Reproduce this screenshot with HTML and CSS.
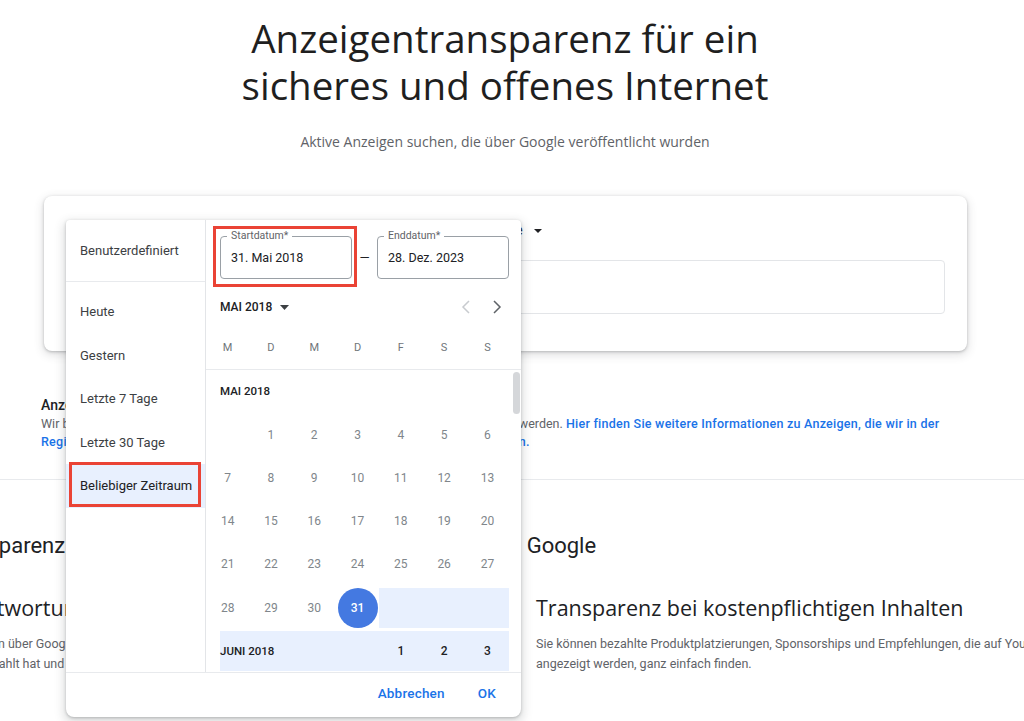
FILE: index.html
```html
<!DOCTYPE html>
<html lang="de">
<head>
  <meta charset="UTF-8">
  <meta name="viewport" content="width=device-width, initial-scale=1.0">
  <title>Google Anzeigentransparenz</title>
  <link rel="stylesheet" href="styles.css">
</head>
<body>
  <main class="page">
    <div class="wrap">
      <header class="hero">
        <h1>Anzeigentransparenz für ein<br>sicheres und offenes Internet</h1>
        <p class="sub">Aktive Anzeigen suchen, die über Google veröffentlicht wurden</p>
      </header>

      <!-- Suchkarte mit Filtern -->
      <section class="search-card">
        <div class="filters">
          <span class="dropdown">Beliebiger Zeitraum <svg width="8" height="4" viewBox="0 0 8 4"><path d="M0 0h8L4 4z"/></svg></span>
          <span class="dropdown">Deutschland <svg width="8" height="4" viewBox="0 0 8 4"><path d="M0 0h8L4 4z"/></svg></span>
          <span class="dropdown">Alle Formate <svg width="8" height="4" viewBox="0 0 8 4"><path d="M0 0h8L4 4z"/></svg></span>
        </div>
        <div class="search-box"></div>
      </section>

      <section class="info">
        <h2>Anzeigen in der Europäischen Union</h2>
        <p>Wir bieten Einblick in Anzeigen verifizierter Werbetreibender, die bei Google geschaltet werden. <a href="#">Hier finden Sie weitere Informationen zu Anzeigen, die wir in der Region Europäischer Wirtschaftsraum (EWR) und in der Schweiz ausgeliefert haben.</a></p>
      </section>
    </div>

    <hr class="rule">

    <section class="about">
      <h2>Transparenz sowie Verantwortung bei Werbeanzeigen über Google</h2>
      <div class="columns">
        <article>
          <h3>Verantwortung der Werbetreibenden</h3>
          <p>Kampagnen über Google sind transparent: Sie sehen den Namen des Werbetreibenden, wer für die Inhalte bezahlt hat und wo sie ausgeliefert wurden.</p>
        </article>
        <article>
          <h3>Transparenz bei kostenpflichtigen Inhalten</h3>
          <p>Sie können bezahlte Produktplatzierungen, Sponsorships und Empfehlungen, die auf YouTube angezeigt werden, ganz einfach finden.</p>
        </article>
      </div>
    </section>

    <!-- Datumsauswahl (geöffnet) -->
    <div class="picker">
      <div class="picker-main">
        <ul class="presets">
          <li class="preset-custom">Benutzerdefiniert</li>
          <li>Heute</li>
          <li>Gestern</li>
          <li>Letzte 7 Tage</li>
          <li>Letzte 30 Tage</li>
          <li class="selected marked">Beliebiger Zeitraum</li>
        </ul>

        <div class="calendar">
          <div class="range">
            <div class="field marked">
              <span class="field-label">Startdatum*</span>
              31. Mai 2018
            </div>
            <span class="dash">—</span>
            <div class="field">
              <span class="field-label">Enddatum*</span>
              28. Dez. 2023
            </div>
          </div>

          <div class="month-nav">
            <span class="month-select">MAI 2018 <svg width="9" height="5" viewBox="0 0 9 5"><path d="M0 0h9L4.5 5z"/></svg></span>
            <span class="nav-btn disabled"><svg width="10" height="14" viewBox="0 0 10 14"><polyline points="8,1 2,7 8,13"/></svg></span>
            <span class="nav-btn"><svg width="10" height="14" viewBox="0 0 10 14"><polyline points="2,1 8,7 2,13"/></svg></span>
          </div>

          <div class="weekdays">
            <span>M</span><span>D</span><span>M</span><span>D</span><span>F</span><span>S</span><span>S</span>
          </div>

          <div class="scroll">
            <div class="month-label">MAI 2018</div>
            <div class="week">
              <span></span><span>1</span><span>2</span><span>3</span><span>4</span><span>5</span><span>6</span>
            </div>
            <div class="week">
              <span>7</span><span>8</span><span>9</span><span>10</span><span>11</span><span>12</span><span>13</span>
            </div>
            <div class="week">
              <span>14</span><span>15</span><span>16</span><span>17</span><span>18</span><span>19</span><span>20</span>
            </div>
            <div class="week">
              <span>21</span><span>22</span><span>23</span><span>24</span><span>25</span><span>26</span><span>27</span>
            </div>
            <div class="week">
              <span>28</span><span>29</span><span>30</span><span class="start"><b>31</b></span><span class="in-range"></span><span class="in-range"></span><span class="in-range"></span>
            </div>
            <div class="week next-month">
              <span class="in-range month-inline">JUNI 2018</span><span class="in-range">1</span><span class="in-range">2</span><span class="in-range">3</span>
            </div>
            <div class="scroll-thumb"></div>
          </div>
        </div>
      </div>

      <div class="picker-footer">
        <button class="text-btn">Abbrechen</button>
        <button class="text-btn">OK</button>
      </div>
    </div>
  </main>
</body>
</html>
```

FILE: styles.css
```css
body {
  margin: 0;
  font-family: Roboto, "Noto Sans", Arial, sans-serif;
  color: #202124;
  background: #fff;
  overflow: hidden;
}
.page {
  position: relative;
  height: 721px;
  overflow: hidden;
}
.wrap {
  width: 1010px;
}
.hero {
  text-align: center;
  padding-top: 15px;
}
.hero h1 {
  margin: 0;
  font-family: "Open Sans", Roboto, sans-serif;
  font-size: 38.5px;
  font-weight: 400;
  line-height: 47px;
  color: #1f1f1f;
}
.sub {
  margin: 23px 0 0;
  font-family: "Open Sans", Roboto, sans-serif;
  font-size: 14px;
  line-height: 20px;
  color: #5f6368;
}
.search-card {
  margin: 44px 43px 0 44px;
  padding: 24px 22px 37px;
  background: #fff;
  border-radius: 8px;
  box-shadow: 0 1px 3px rgba(60, 64, 67, 0.3), 0 3px 8px 2px rgba(60, 64, 67, 0.13);
}
.filters {
  display: flex;
  gap: 70px;
  height: 20px;
  align-items: center;
  font-size: 14px;
}
.dropdown svg {
  margin-left: 8px;
  vertical-align: middle;
  fill: #202124;
}
.search-box {
  margin-top: 20px;
  height: 52px;
  border: 1px solid #e3e5e8;
  border-radius: 4px;
}
.info {
  margin: 44px 65px 0 41px;
}
.info h2 {
  margin: 0;
  font-size: 14px;
  font-weight: 500;
  line-height: 20px;
}
.info p {
  margin: 0;
  font-size: 12.5px;
  line-height: 18px;
  color: #5f6368;
}
.info a {
  color: #1a73e8;
  font-weight: 500;
  letter-spacing: 0.25px;
  text-decoration: none;
}
.rule {
  margin: 28px 0 0;
  border: none;
  border-top: 1px solid #e8eaed;
}
.about {
  margin-left: -56px;
  width: 1156px;
}
.about h2 {
  margin: 51px 0 0;
  font-size: 22px;
  font-weight: 400;
  line-height: 30px;
  word-spacing: 0.6px;
}
.columns {
  display: grid;
  grid-template-columns: 560px 560px;
  gap: 38px;
  margin: 33px 0 0 -6px;
}
.columns h3 {
  margin: 0;
  font-family: "Open Sans", Roboto, sans-serif;
  font-size: 21.5px;
  font-weight: 500;
  line-height: 28px;
}
.columns p {
  margin: 12px 0 0;
  font-size: 12.5px;
  line-height: 20px;
  color: #5f6368;
}

/* Datumsauswahl */
.picker {
  position: absolute;
  left: 66px;
  top: 220px;
  width: 455px;
  background: #fff;
  border-radius: 4px 4px 8px 8px;
  box-shadow: 0 1px 3px rgba(60, 64, 67, 0.3), 0 4px 10px 3px rgba(60, 64, 67, 0.15);
  font-size: 13px;
  color: #3c4043;
}
.picker-main {
  display: flex;
  height: 452px;
}
.presets {
  width: 139px;
  flex-shrink: 0;
  margin: 0;
  padding: 0;
  list-style: none;
  border-right: 1px solid #e3e5e8;
}
.presets li {
  position: relative;
  height: 43.5px;
  display: flex;
  align-items: center;
  padding-left: 14px;
}
.presets .preset-custom {
  height: 62px;
  margin-bottom: 8px;
  border-bottom: 1px solid #e8eaed;
  box-sizing: border-box;
}
.presets .selected {
  background: #e8f0fe;
  color: #202124;
}
.marked::after {
  content: "";
  position: absolute;
  border: 3px solid #ea4335;
}
.presets .marked::after {
  top: -2px;
  right: 4px;
  bottom: 1px;
  left: 3px;
}
.calendar {
  flex: 1;
  display: flex;
  flex-direction: column;
  min-width: 0;
}
.range {
  display: flex;
  align-items: center;
  padding: 16px 0 0 14px;
}
.field {
  position: relative;
  width: 132px;
  height: 43px;
  box-sizing: border-box;
  border: 1px solid #9aa0a6;
  border-radius: 4px;
  padding-left: 10px;
  display: flex;
  align-items: center;
  font-size: 12.5px;
  color: #202124;
}
.field.marked::after {
  top: -11px;
  right: -6px;
  bottom: -9px;
  left: -8px;
}
.field-label {
  position: absolute;
  top: -7px;
  left: 6px;
  padding: 0 4px;
  background: #fff;
  font-size: 10.5px;
  line-height: 12px;
  color: #5f6368;
}
.dash {
  width: 25px;
  text-align: center;
  color: #202124;
}
.month-nav {
  display: flex;
  align-items: center;
  gap: 7px;
  height: 36px;
  margin-top: 10px;
  padding: 0 12px 0 14px;
}
.month-select {
  flex: 1;
  font-size: 12px;
  font-weight: 500;
  color: #202124;
}
.month-select svg {
  margin-left: 5px;
  vertical-align: middle;
  fill: #3c4043;
}
.nav-btn {
  width: 24px;
  display: flex;
  justify-content: center;
}
.nav-btn svg {
  fill: none;
  stroke: #5f6368;
  stroke-width: 1.5;
}
.nav-btn.disabled svg {
  stroke: #c8cbcf;
}
.weekdays,
.week {
  display: grid;
  grid-template-columns: repeat(7, 43.3px);
}
.weekdays {
  height: 44px;
  align-items: center;
  border-bottom: 1px solid #e8eaed;
  font-size: 11px;
  color: #70757a;
  text-align: center;
}
.scroll {
  position: relative;
  flex: 1;
  overflow: hidden;
}
.month-label {
  height: 42.4px;
  display: flex;
  align-items: center;
  padding-left: 14px;
  font-size: 11.5px;
  font-weight: 500;
  color: #202124;
}
.week {
  height: 43.3px;
  font-size: 12px;
  color: #80868b;
}
.week span {
  display: flex;
  align-items: center;
  justify-content: center;
  box-sizing: border-box;
  padding: 2px 0 1px;
  background-clip: content-box;
}
.week .in-range {
  background-color: #e8f0fe;
}
.week .start b {
  width: 40px;
  height: 40px;
  border-radius: 50%;
  background: #4479e1;
  color: #fff;
  font-weight: 500;
  display: flex;
  align-items: center;
  justify-content: center;
}
.next-month {
  color: #202124;
  font-weight: 500;
}
.next-month span {
  padding-top: 2px;
}
.week .month-inline {
  grid-column: span 4;
  justify-content: flex-start;
  padding-left: 14px;
  font-size: 11.5px;
}
.scroll-thumb {
  position: absolute;
  top: 2px;
  right: 1px;
  width: 7px;
  height: 42px;
  border-radius: 4px;
  background: #d5d7da;
}
.picker-footer {
  height: 45px;
  box-sizing: border-box;
  border-top: 1px solid #e8eaed;
  display: flex;
  justify-content: flex-end;
  align-items: center;
  gap: 9px;
  padding: 0 13px 4px 0;
}
.text-btn {
  height: 36px;
  padding: 0 12px;
  border: none;
  background: none;
  font-family: inherit;
  font-size: 13.5px;
  font-weight: 500;
  letter-spacing: 0.2px;
  color: #1a73e8;
  cursor: pointer;
}
```
